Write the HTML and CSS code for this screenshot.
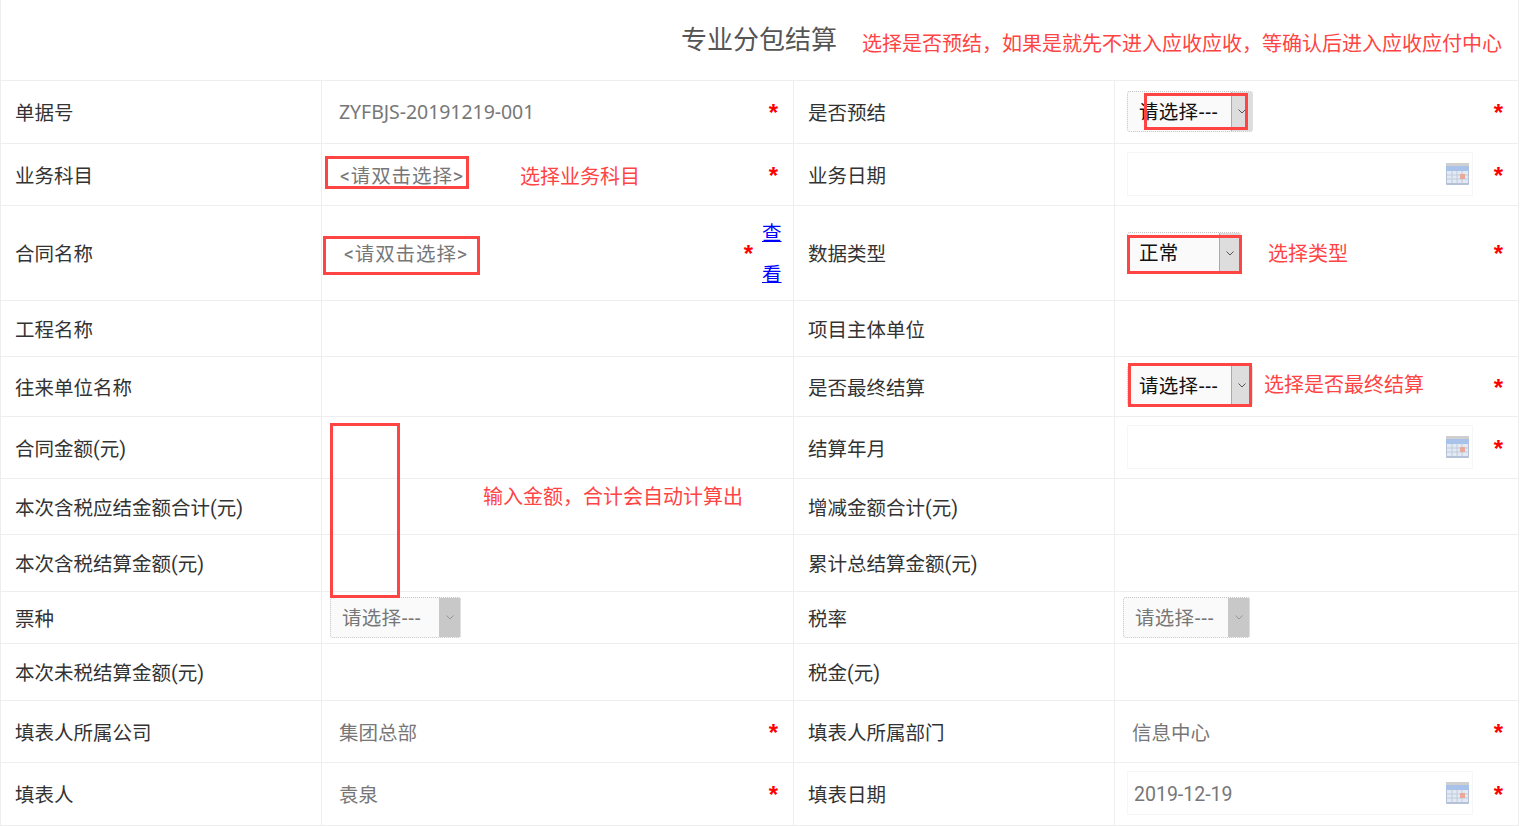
FILE: index.html
```html
<!DOCTYPE html>
<html lang="zh">
<head>
<meta charset="utf-8">
<title>专业分包结算</title>
<link rel="stylesheet" href="styles.css">
</head>
<body>
<svg class="defs" width="0" height="0" aria-hidden="true">
  <defs>
    <symbol id="cal" viewBox="0 0 23 22">
      <rect x="0" y="0" width="23" height="22" rx="1" fill="#b4c1d6"/>
      <rect x="0" y="0" width="23" height="3" fill="#cfcfcf"/>
      <rect x="0" y="3" width="23" height="5" fill="#a9c2ea"/>
      <rect x="1" y="8" width="21" height="12" fill="#e3e9f3"/>
      <path d="M1 12h21M1 16h21M6 8v12M11 8v12M16 8v12" stroke="#c0cbdd" stroke-width="1"/>
      <rect x="14" y="11" width="5" height="5" fill="#e9a99a"/>
    </symbol>
    <symbol id="chev" viewBox="0 0 8 5">
      <path d="M0.5 0.5L4 4L7.5 0.5" fill="none" stroke="currentColor" stroke-width="1"/>
    </symbol>
  </defs>
</svg>
<main class="page">
  <div class="form">
    <div class="title-row"><h1 class="title">专业分包结算</h1></div>

    <div class="cell label">单据号</div>
    <div class="cell value"><span class="text muted code">ZYFBJS-20191219-001</span><span class="star">*</span></div>
    <div class="cell label">是否预结</div>
    <div class="cell value"><div class="select sel-a"><span class="sel-text">请选择---</span><span class="sel-btn"><svg class="chev"><use href="#chev"/></svg></span></div><span class="star">*</span></div>

    <div class="cell label">业务科目</div>
    <div class="cell value"><span class="text muted pick-a">&lt;请双击选择&gt;</span><span class="star">*</span></div>
    <div class="cell label">业务日期</div>
    <div class="cell value"><div class="date"><span></span><svg class="cal"><use href="#cal"/></svg></div><span class="star">*</span></div>

    <div class="cell label">合同名称</div>
    <div class="cell value"><span class="text muted pick-b">&lt;请双击选择&gt;</span><span class="star star-mid">*</span><a class="link" href="#">查看</a></div>
    <div class="cell label">数据类型</div>
    <div class="cell value"><div class="select sel-b"><span class="sel-text">正常</span><span class="sel-btn"><svg class="chev"><use href="#chev"/></svg></span></div><span class="star">*</span></div>

    <div class="cell label">工程名称</div>
    <div class="cell value"></div>
    <div class="cell label">项目主体单位</div>
    <div class="cell value"></div>

    <div class="cell label">往来单位名称</div>
    <div class="cell value"></div>
    <div class="cell label">是否最终结算</div>
    <div class="cell value"><div class="select sel-a"><span class="sel-text">请选择---</span><span class="sel-btn"><svg class="chev"><use href="#chev"/></svg></span></div><span class="star">*</span></div>

    <div class="cell label">合同金额(元)</div>
    <div class="cell value"></div>
    <div class="cell label">结算年月</div>
    <div class="cell value"><div class="date"><span></span><svg class="cal"><use href="#cal"/></svg></div><span class="star">*</span></div>

    <div class="cell label">本次含税应结金额合计(元)</div>
    <div class="cell value"></div>
    <div class="cell label">增减金额合计(元)</div>
    <div class="cell value"></div>

    <div class="cell label">本次含税结算金额(元)</div>
    <div class="cell value"></div>
    <div class="cell label">累计总结算金额(元)</div>
    <div class="cell value"></div>

    <div class="cell label">票种</div>
    <div class="cell value tight"><div class="select sel-off"><span class="sel-text">请选择---</span><span class="sel-btn"><svg class="chev"><use href="#chev"/></svg></span></div></div>
    <div class="cell label">税率</div>
    <div class="cell value tight"><div class="select sel-off sel-narrow"><span class="sel-text">请选择---</span><span class="sel-btn"><svg class="chev"><use href="#chev"/></svg></span></div></div>

    <div class="cell label">本次未税结算金额(元)</div>
    <div class="cell value"></div>
    <div class="cell label">税金(元)</div>
    <div class="cell value"></div>

    <div class="cell label">填表人所属公司</div>
    <div class="cell value"><span class="text muted">集团总部</span><span class="star">*</span></div>
    <div class="cell label">填表人所属部门</div>
    <div class="cell value"><span class="text muted">信息中心</span><span class="star">*</span></div>

    <div class="cell label">填表人</div>
    <div class="cell value"><span class="text muted">袁泉</span><span class="star">*</span></div>
    <div class="cell label">填表日期</div>
    <div class="cell value"><div class="date"><span class="date-text">2019-12-19</span><svg class="cal"><use href="#cal"/></svg></div><span class="star">*</span></div>
  </div>

  <div class="note note-title">选择是否预结，如果是就先不进入应收应收，等确认后进入应收应付中心</div>
  <div class="note note-subject">选择业务科目</div>
  <div class="note note-type">选择类型</div>
  <div class="note note-final">选择是否最终结算</div>
  <div class="note note-amount">输入金额，合计会自动计算出</div>

  <div class="mark mark-1"></div>
  <div class="mark mark-2"></div>
  <div class="mark mark-3"></div>
  <div class="mark mark-4"></div>
  <div class="mark mark-5"></div>
  <div class="mark mark-6"></div>
</main>
</body>
</html>
```
FILE: styles.css
```css
* { box-sizing: border-box; }
html, body { margin: 0; padding: 0; background: #fff; }
body {
  font-family: Roboto, "Noto Sans CJK SC", sans-serif;
  font-size: 19.5px;
  line-height: 28px;
  color: #333;
  overflow: hidden;
}
.defs { position: absolute; }
.page { position: relative; width: 1522px; height: 826px; overflow: hidden; }
.form {
  width: 1519px;
  display: grid;
  grid-template-columns: 321px 472px 321px 404px;
  grid-template-rows: 81px 63px 62px 95px 56px 60px 62px 56px 57px 52px 57px 62px 63px;
  border-left: 1px solid #eee;
}
.title-row {
  grid-column: 1 / -1;
  border-right: 1px solid #eee;
  border-bottom: 1px solid #eee;
  padding-left: 680px;
  padding-top: 21px;
}
.title { margin: 0; font-size: 26px; font-weight: 400; line-height: 38px; color: #555; }
.cell {
  display: flex;
  align-items: center;
  border-right: 1px solid #eee;
  border-bottom: 1px solid #eee;
  min-width: 0;
}
.label { padding: 4px 0 0 14px; color: #333; white-space: nowrap; }
.value { padding: 0 15px 0 12px; }
.value.tight { padding-left: 8px; }
.text { flex: 1; padding: 4px 0 0 5px; white-space: nowrap; }
.muted { color: #777; }
.code { font-family: "Noto Sans", "Noto Sans CJK SC", sans-serif; letter-spacing: -.05px; padding-top: 0; }
.pick-a { padding-left: 6px; letter-spacing: .9px; }
.pick-b { padding-left: 10px; letter-spacing: .9px; }
.star {
  margin-left: auto;
  color: #f00;
  font-family: "Liberation Sans", sans-serif;
  font-weight: 700;
  font-size: 24px;
  line-height: 24px;
  position: relative;
  top: 1px;
}
.star-mid { margin-left: 0; margin-right: 9px; }
.link {
  width: 20px;
  padding-top: 1px;
  line-height: 41px;
  color: #00f;
  text-decoration: underline;
  white-space: normal;
  margin-right: -4px;
}
.select {
  display: flex;
  width: 126px;
  height: 41px;
  margin-bottom: 2px;
  background: #fafafa;
  border: 1px dotted #c4c4c4;
  border-radius: 3px;
  color: #111;
}
.sel-b { width: 114px; height: 42px; margin-bottom: 0; }
.sel-text {
  flex: 1;
  padding: 1px 0 0 11px;
  font-family: "Noto Sans", "Noto Sans CJK SC", sans-serif;
  line-height: 37px;
  letter-spacing: .3px;
  white-space: nowrap;
}
.sel-btn {
  width: 21px;
  display: flex;
  align-items: center;
  justify-content: center;
  background: #ddd;
  border-left: 1px solid #aaa;
  color: #555;
}
.chev { width: 8px; height: 5px; }
.sel-off { width: 131px; margin-bottom: 0; color: #777; }
.sel-narrow { width: 127px; }
.sel-off .sel-btn { background: #c8c8c8; border-left-color: #c8c8c8; color: #999; }
.date {
  flex: 1;
  display: flex;
  align-items: center;
  justify-content: space-between;
  height: 44px;
  margin: 0 21px 2px 0;
  padding: 0 3px 0 6px;
  border: 1px solid #f6f6f6;
}
.date-text { padding-top: 3px; color: #777; }
.cal { width: 23px; height: 22px; }
.note { position: absolute; font-size: 20px; line-height: 28px; color: #f44; white-space: nowrap; }
.note-title { left: 862px; top: 30px; }
.note-subject { left: 520px; top: 163px; }
.note-type { left: 1268px; top: 240px; }
.note-final { left: 1264px; top: 371px; }
.note-amount { left: 483px; top: 483px; }
.mark { position: absolute; border: 3px solid #f44; }
.mark-1 { left: 325px; top: 156px; width: 144px; height: 33px; }
.mark-2 { left: 323px; top: 236px; width: 157px; height: 39px; }
.mark-3 { left: 1144px; top: 93px; width: 104px; height: 37px; }
.mark-4 { left: 1127px; top: 235px; width: 115px; height: 39px; }
.mark-5 { left: 1128px; top: 363px; width: 124px; height: 44px; }
.mark-6 { left: 330px; top: 423px; width: 70px; height: 175px; }
```
